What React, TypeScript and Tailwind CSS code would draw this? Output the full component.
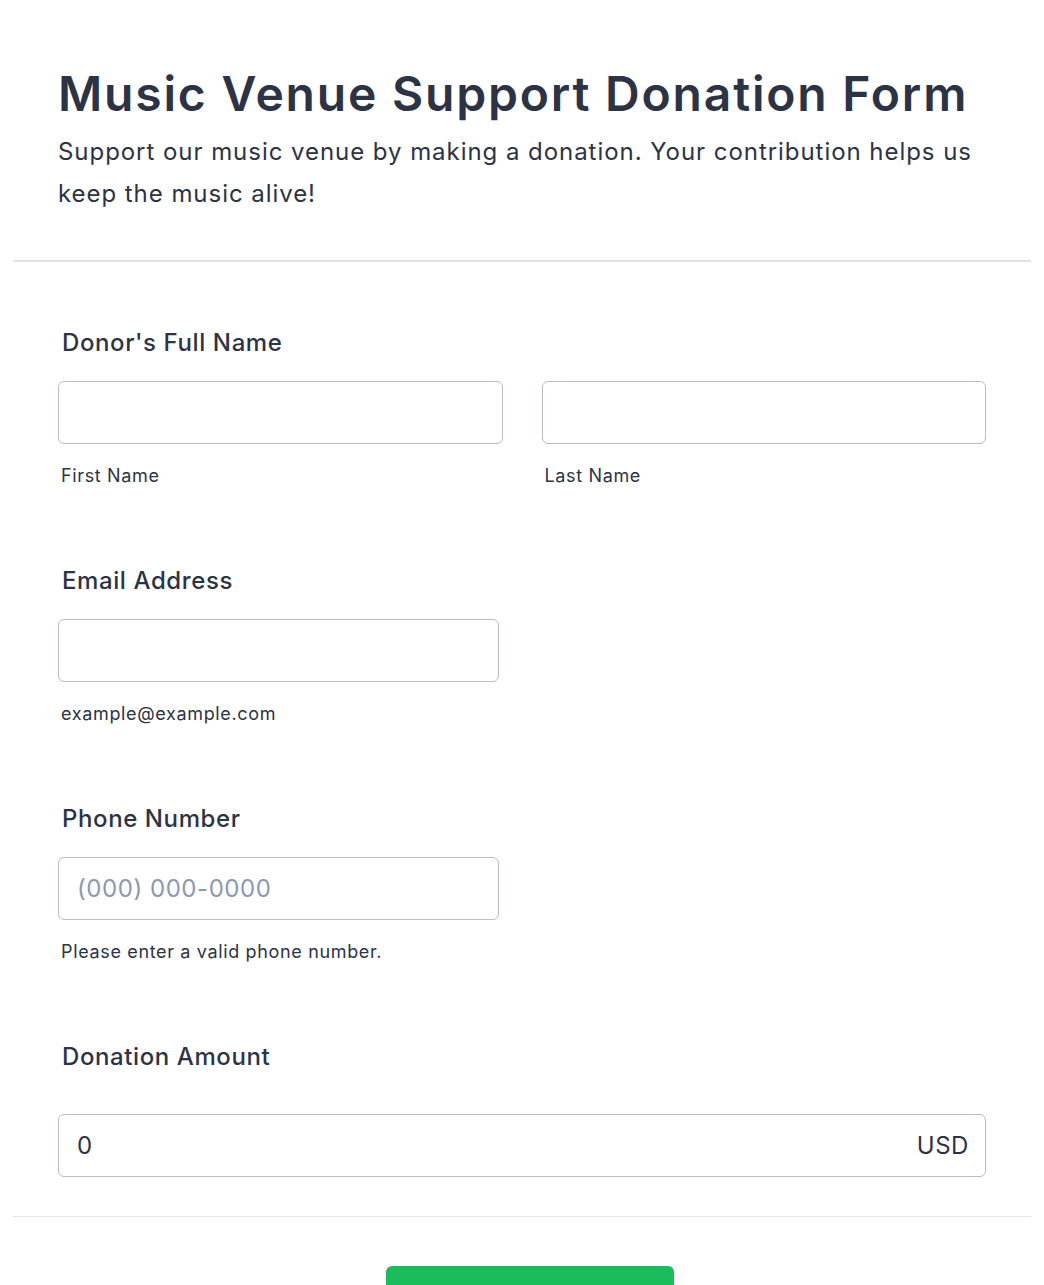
import React from "react";

function Field({
  label,
  children,
  gap = "mt-5",
}: {
  label: string;
  children: React.ReactNode;
  gap?: string;
}) {
  return (
    <div>
      <div className="pl-1 text-2xl font-medium leading-9 tracking-[0.6px] text-[#2c3345]">{label}</div>
      <div className={gap}>{children}</div>
    </div>
  );
}

function Box({ placeholder, value, suffix }: { placeholder?: string; value?: string; suffix?: string }) {
  return (
    <div className="flex h-[63px] items-center justify-between rounded-md border border-[#b8bccb] bg-white pl-[18px] pr-4 text-2xl tracking-[0.55px]">
      {placeholder ? <span className="text-[#8c98b0]">{placeholder}</span> : <span className="text-[#2c3345]">{value}</span>}
      {suffix && <span className="text-[#2c3345]">{suffix}</span>}
    </div>
  );
}

function Hint({ children }: { children: React.ReactNode }) {
  return <div className="mt-[18px] pl-[3px] text-lg leading-7 tracking-[0.65px] text-[#2c3345]">{children}</div>;
}

export default function App() {
  return (
    <div className="min-h-[1285px] bg-white px-[13px] font-['Inter',sans-serif] text-[#2c3345]">
      <header className="px-[45px] pt-[65px] pb-[45px]">
        <h1 className="text-5xl font-semibold leading-[58px] tracking-[1.8px]">Music Venue Support Donation Form</h1>
        <p className="mt-2 text-2xl leading-[42px] tracking-[0.95px]">
          Support our music venue by making a donation. Your contribution helps us keep the music alive!
        </p>
      </header>
      <div className="h-[2px] bg-[#e2e3ea]" />

      <main className="flex flex-col gap-[73px] px-[45px] pt-[63px]">
        <Field label="Donor's Full Name">
          <div className="grid grid-cols-2 gap-[39px]">
            <div>
              <Box />
              <Hint>First Name</Hint>
            </div>
            <div>
              <Box />
              <Hint>Last Name</Hint>
            </div>
          </div>
        </Field>

        <Field label="Email Address">
          <div className="w-[441px]">
            <Box />
            <Hint>example@example.com</Hint>
          </div>
        </Field>

        <Field label="Phone Number">
          <div className="w-[441px]">
            <Box placeholder="(000) 000-0000" />
            <Hint>Please enter a valid phone number.</Hint>
          </div>
        </Field>

        <Field label="Donation Amount" gap="mt-[39px]">
          <Box value="0" suffix="USD" />
        </Field>
      </main>

      <div className="mt-[39px] h-px bg-[#e6e7ec]" />
      <div className="flex justify-center pl-4 pt-[49px]">
        <button className="h-[76px] w-[288px] rounded-md bg-[#1bbc5a] text-2xl font-medium text-white">Submit</button>
      </div>
    </div>
  );
}
